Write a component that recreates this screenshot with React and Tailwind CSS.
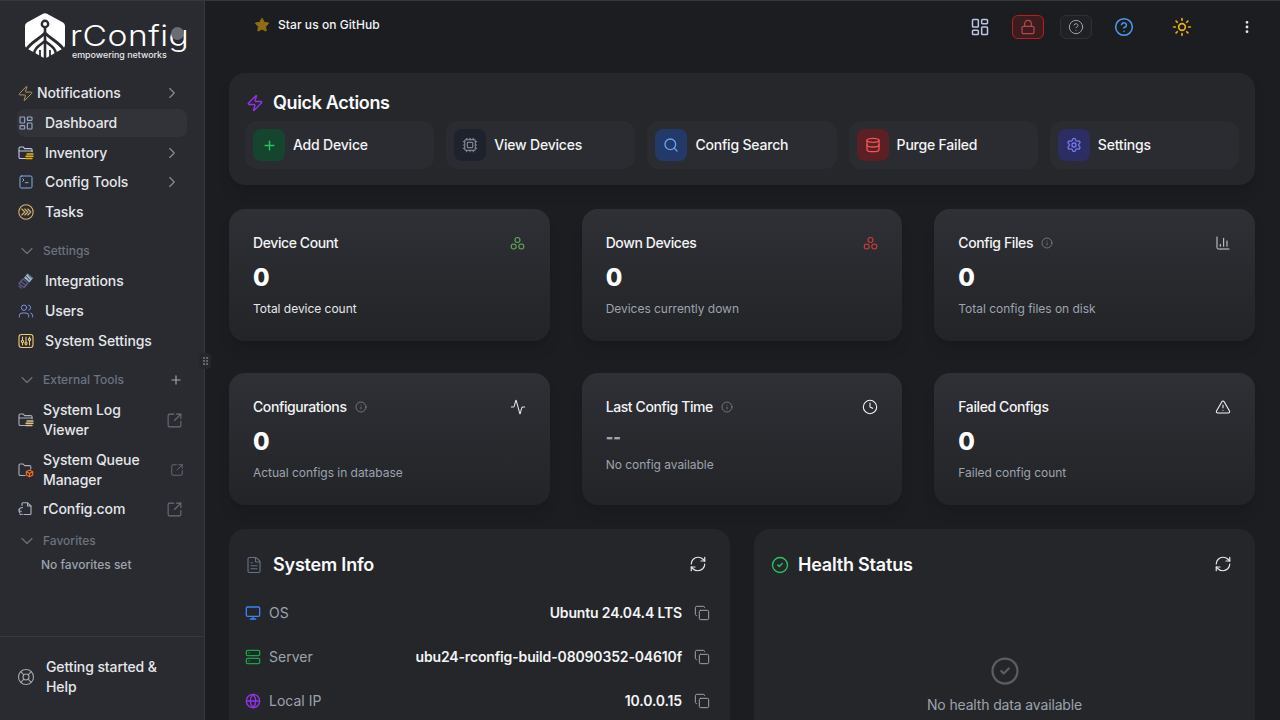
import React from "react";
import {
  Zap, LayoutDashboard, SquareTerminal, ChevronRight, ChevronDown, Users, Plus, SquareArrowOutUpRight,
  LifeBuoy, Star, Lock, CircleHelp, Sun, EllipsisVertical, Cpu, Search, Database, Settings, Activity,
  Clock, TriangleAlert, ChartColumn, Info, FileText, RefreshCw, Monitor, Server, Globe, Copy, CircleCheck,
} from "lucide-react";

const FolderLines = ({ accent = "#eab308", base = "#c0c8e6", size = 16 }) => (
  <svg width={size} height={size} viewBox="0 0 16 16" fill="none" strokeWidth="1.100" strokeLinecap="round">
    <path d="M8 13.500H2.200A1.200 1.200 0 0 1 1 12.300V3.200A1.200 1.200 0 0 1 2.200 2h3l1.400 1.600h6.200a1.200 1.200 0 0 1 1.200 1.200v2" stroke={base} />
    <path d="M1.200 6h13" stroke={base} />
    <path d="M9 9h6M8 11.200h7M8 13.500h6" stroke={accent} strokeWidth="1.400" />
  </svg>
);

const FolderBox = () => (
  <svg width="16" height="16" viewBox="0 0 16 16" fill="none" strokeWidth="1.100" strokeLinecap="round" strokeLinejoin="round">
    <path d="M7 13.500H2.200A1.200 1.200 0 0 1 1 12.300V3.200A1.200 1.200 0 0 1 2.200 2h3l1.400 1.600h5a1.200 1.200 0 0 1 1.200 1.200V7" stroke="#aab0c0" />
    <path d="M11.500 8l3.200 1.700v3.300l-3.200 1.700L8.300 13V9.700zM8.300 9.700l3.200 1.700 3.200-1.700M11.500 11.400v3.300" stroke="#f97316" />
  </svg>
);

const CloudDoc = () => (
  <svg width="16" height="16" viewBox="0 0 16 16" fill="none" stroke="#a9b1c9" strokeWidth="1.100" strokeLinecap="round" strokeLinejoin="round">
    <path d="M4 4.500V2.800A1 1 0 0 1 5 1.800h4.500L13 5v7.500a1 1 0 0 1-1 1H6" />
    <path d="M9.500 2v3H13" />
    <path d="M4.500 6.500a3.500 3.500 0 0 0-3.300 3.500c0 .8.300 1.500.8 2.100M1 8v2.300h2.300M2 13.500l2.500-.3" />
  </svg>
);

const TasksIcon = () => (
  <svg width="16" height="16" viewBox="0 0 16 16" fill="none" stroke="#d9b36c" strokeWidth="1.100" strokeLinecap="round" strokeLinejoin="round">
    <circle cx="8" cy="8" r="7.200" />
    <path d="M3.800 5l3 3-3 3M6.800 5l3 3-3 3M9.800 5l3 3-3 3" />
  </svg>
);

const IntegrationIcon = () => (
  <svg width="16" height="16" viewBox="0 0 16 16" fill="none" strokeLinecap="round">
    <path d="M9.500 .5l5.500 4.500-3.500 4.500L6 5z" fill="#9db3d2" />
    <path d="M10.500 2l3 3M8.500 3.500l3 3.500" stroke="#2a2b30" strokeWidth=".8" />
    <path d="M5 6l5 4-4 4.500-5-4z" stroke="#5d5a86" strokeWidth="1.300" />
    <path d="M3 8.500l5 4M1 13l2 2" stroke="#5d5a86" strokeWidth="1.300" />
  </svg>
);

const SlidersBox = () => (
  <svg width="16" height="16" viewBox="0 0 16 16" fill="none" stroke="#f0cc7a" strokeWidth="1.100" strokeLinecap="round">
    <rect x="1" y="1.500" width="14" height="13" rx="2.500" />
    <path d="M4.500 4v2.800M4.500 10V12M8 4v5M8 11.500v.5M11.500 4v1M11.500 8.200v3.800" />
    <circle cx="4.500" cy="8.400" r="1.100" />
    <circle cx="8" cy="10.300" r="1.100" />
    <circle cx="11.500" cy="6.500" r="1.100" />
  </svg>
);

const TriCircles = ({ color }) => (
  <svg width="15" height="15" viewBox="0 0 15 15" fill="none" stroke={color} strokeWidth="1.100">
    <circle cx="7.500" cy="4" r="2.500" />
    <circle cx="3.700" cy="10.500" r="2.500" />
    <circle cx="11.300" cy="10.500" r="2.500" />
  </svg>
);

const Logo = () => (
  <div className="h-[78px] pl-[25px] pt-[12px] flex items-start relative">
    <svg width="40" height="45" viewBox="0 0 40 45" className="shrink-0">
      <path d="M18 .8a4 4 0 0 1 4 0L38 9.500a4 4 0 0 1 2 3.500V32a4 4 0 0 1-2 3.500L22 44.500a4 4 0 0 1-4 0L2 35.500A4 4 0 0 1 0 32V13a4 4 0 0 1 2-3.500z" fill="#fff" />
      <circle cx="20" cy="11" r="3.200" fill="#fff" stroke="#2a2b30" strokeWidth="2.400" />
      <path d="M20 15V45" stroke="#2a2b30" strokeWidth="2.600" />
      <path d="M1 37C6 29 13 27 20 20C27 27 34 29 39 37" stroke="#2a2b30" strokeWidth="2.800" fill="none" />
      <path d="M9 42C9 35 14 33 20 28C26 33 31 35 31 42" stroke="#2a2b30" strokeWidth="2.600" fill="none" />
      <path d="M15 44.500V37M25 44.500V37" stroke="#2a2b30" strokeWidth="1.800" />
    </svg>
    <div className="ml-[5px] flex flex-col relative">
      <span className="text-[28px] leading-[28px] mt-[9px] font-light text-white tracking-[0.4px] origin-left scale-x-[1.2] font-['Inter',sans-serif]">rConfig</span>
      <span className="text-[8.900px] leading-[10px] font-medium text-[#e5e7eb] ml-[2px] whitespace-nowrap">empowering networks</span>
    </div>
    <span aria-hidden="true" className="absolute left-[171px] top-[26px] w-[13px] h-[13px] rounded-full bg-[#6b6d72]" />
  </div>
);

const NavRow = ({ icon, label, chevron, active, className = "" }) => (
  <div className={`h-7 mx-[17px] flex items-center rounded-lg pr-[6px] ${active ? "bg-[#323338]" : ""} ${className}`}>
    <span className="w-[16px] ml-px flex justify-center shrink-0">{icon}</span>
    <span className="text-sm font-medium text-[#e5e7eb] ml-[11px] tracking-[-0.1px]">{label}</span>
    {chevron && <ChevronRight size={18} strokeWidth={1.500} className="ml-auto text-[#8b8e96]" />}
  </div>
);

const GroupHead = ({ label, plus, className = "" }) => (
  <div className={`h-5 ml-[17px] mr-[21px] flex items-center ${className}`}>
    <ChevronDown size={20} strokeWidth={1.300} className="text-[#6b7280] shrink-0" />
    <span className="ml-[6px] text-xs font-medium text-[#6b7280]">{label}</span>
    {plus && <Plus size={14} strokeWidth={2} className="ml-auto text-[#a3a7b0]" />}
  </div>
);

const LinkRow = ({ icon, label, extSize = 17, extClass = "mr-[21px]", className = "" }) => (
  <div className={`ml-[17px] flex items-center ${className}`}>
    <span className="w-[16px] ml-px flex justify-center shrink-0">{icon}</span>
    <span className="ml-[9px] w-[100px] text-sm leading-5 font-medium text-[#e5e7eb] shrink-0 tracking-[-0.1px]">{label}</span>
    <SquareArrowOutUpRight size={extSize} strokeWidth={1.500} className={`ml-auto text-[#687080] ${extClass}`} />
  </div>
);

const Sidebar = () => (
  <aside className="w-[205px] shrink-0 h-full bg-[#2a2b30] border-r border-[#36373c] flex flex-col relative">
    <Logo />
    <nav className="flex flex-col gap-[2px]">
      <div className="h-7 mx-[17px] flex items-center pr-[6px]">
        <Zap size={17} strokeWidth={1.400} className="text-[#b3965f] shrink-0" />
        <span className="ml-[3px] text-sm font-medium text-[#e5e7eb] tracking-[-0.1px]">Notifications</span>
        <ChevronRight size={18} strokeWidth={1.500} className="ml-auto text-[#8b8e96]" />
      </div>
      <NavRow active icon={<LayoutDashboard size={18} strokeWidth={1.700} className="text-[#99a6cc]" />} label="Dashboard" />
      <NavRow icon={<FolderLines />} label="Inventory" chevron />
      <NavRow className="-mt-px" icon={<SquareTerminal size={18} strokeWidth={1.500} className="text-[#7fb2e5]" />} label="Config Tools" chevron />
      <NavRow icon={<TasksIcon />} label="Tasks" />
    </nav>
    <GroupHead label="Settings" className="mt-[15px]" />
    <div className="flex flex-col gap-[2px] mt-[6px]">
      <NavRow icon={<IntegrationIcon />} label="Integrations" />
      <NavRow icon={<Users size={18} strokeWidth={1.500} className="text-[#7f90db]" />} label="Users" />
      <NavRow icon={<SlidersBox />} label="System Settings" />
    </div>
    <GroupHead label="External Tools" plus className="mt-[15px]" />
    <LinkRow className="mt-[10px]" icon={<FolderLines size={16} base="#aab0c0" accent="#d9c08a" />} label={<>System Log<br />Viewer</>} />
    <LinkRow className="mt-[10px]" icon={<FolderBox />} label={<>System Queue<br />Manager</>} extSize={14} extClass="mr-[20px]" />
    <LinkRow className="mt-[5px] h-7" icon={<CloudDoc />} label="rConfig.com" />
    <GroupHead label="Favorites" className="mt-[8px]" />
    <div className="mt-[4px] ml-[41px] text-xs leading-5 font-medium text-[#9ca3af]">No favorites set</div>
    <div className="mt-auto h-[84px] border-t border-[#36373c] pl-[17px] pb-[4px] flex items-center">
      <LifeBuoy size={18} strokeWidth={1.500} className="text-[#a3a7b0] shrink-0" />
      <span className="ml-[11px] text-sm leading-5 font-medium text-[#e5e7eb] tracking-[-0.1px]">Getting started &amp;<br />Help</span>
    </div>
    <div className="absolute left-[199px] top-[352px] w-[12px] h-[16px] rounded bg-[#26272b] flex items-center justify-center z-10">
      <svg width="5" height="8" viewBox="0 0 5 8" fill="#b0b4bc">
        <circle cx="1" cy="1" r=".8" /><circle cx="4" cy="1" r=".8" />
        <circle cx="1" cy="4" r=".8" /><circle cx="4" cy="4" r=".8" />
        <circle cx="1" cy="7" r=".8" /><circle cx="4" cy="7" r=".8" />
      </svg>
    </div>
  </aside>
);

const Topbar = () => (
  <div className="h-[72px] flex items-start pl-[49px] pr-[25px] shrink-0">
    <div className="flex items-center h-4 mt-[16px]">
      <Star size={16} strokeWidth={1.500} className="text-[#8f6d10] fill-[#8f6d10]" />
      <span className="ml-2 text-xs font-medium text-[#f3f4f6] tracking-[0.06px]">Star us on GitHub</span>
    </div>
    <div className="ml-auto flex items-center h-6 mt-[14px]">
      <LayoutDashboard size={20} strokeWidth={1.800} className="text-[#bcc5e3]" />
      <div className="ml-[22px] w-[32px] h-[24px] rounded-md border border-[#b91c1c] bg-[#3b1d20] flex items-center justify-center">
        <Lock size={16} strokeWidth={1.800} className="text-[#b5474c]" />
      </div>
      <div className="ml-[16px] w-[32px] h-[24px] rounded-md border border-[#303137] bg-[#202125] flex items-center justify-center">
        <CircleHelp size={16} strokeWidth={1.500} className="text-[#9ca3af]" />
      </div>
      <CircleHelp size={20} strokeWidth={1.800} className="ml-[22px] text-[#4b9bf0]" />
      <Sun size={20} strokeWidth={2} className="ml-[38px] text-[#eab308]" />
      <EllipsisVertical size={16} strokeWidth={2.200} className="ml-[47px] text-[#e5e7eb]" />
    </div>
  </div>
);

const actions = [
  { label: "Add Device", box: "bg-[#16452f]", icon: <Plus size={15} strokeWidth={2.200} className="text-[#22c55e]" /> },
  { label: "View Devices", box: "bg-[#1e222c]", icon: <Cpu size={16} strokeWidth={1.800} className="text-[#7d8390]" /> },
  { label: "Config Search", box: "bg-[#233a68]", icon: <Search size={16} strokeWidth={2} className="text-[#60a5fa]" /> },
  { label: "Purge Failed", box: "bg-[#5b1f24]", icon: <Database size={16} strokeWidth={2} className="text-[#f05656]" /> },
  { label: "Settings", box: "bg-[#2c2d63]", icon: <Settings size={16} strokeWidth={2} className="text-[#7678ed]" /> },
];

const QuickActions = () => (
  <section className="rounded-2xl bg-[#26272b] shadow-lg px-4 pt-4 pb-4">
    <div className="h-7 flex items-center">
      <Zap size={18} strokeWidth={1.800} className="text-[#9333ea] ml-px" />
      <span className="ml-[9px] text-lg font-semibold text-[#f9fafb] tracking-[-0.35px]">Quick Actions</span>
    </div>
    <div className="mt-1 grid grid-cols-5 gap-3">
      {actions.map((a) => (
        <div key={a.label} className="h-12 rounded-xl bg-[#2b2c31] flex items-center pl-2">
          <span className={`w-8 h-8 rounded-lg flex items-center justify-center ${a.box}`}>{a.icon}</span>
          <span className="ml-2 text-sm font-medium text-[#f3f4f6] tracking-[-0.2px]">{a.label}</span>
        </div>
      ))}
    </div>
  </section>
);

const StatCard = ({ title, info, icon, value, sub, subClass = "text-[#9ca3af]", dash }) => (
  <div className="rounded-2xl bg-gradient-to-b from-[#2f3035] to-[#232428] shadow-lg p-6">
    <div className="h-5 flex items-center">
      <span className="text-sm font-medium text-[#f3f4f6] tracking-[-0.4px]">{title}</span>
      {info && <Info size={12} strokeWidth={1.400} className="ml-[8px] text-[#8b8e96]" />}
      <span className="ml-auto flex items-center justify-center w-4 h-4">{icon}</span>
    </div>
    {dash ? (
      <div className="mt-2 text-base leading-6 font-black text-[#9ca3af]">--</div>
    ) : (
      <div className="mt-[9px] text-2xl leading-8 font-extrabold text-white">{value}</div>
    )}
    <div className={`${dash ? "mt-2" : "mt-[7px]"} text-xs leading-4 tracking-[-0.03px] ${subClass}`}>{sub}</div>
  </div>
);

const InfoRow = ({ icon, label, value }) => (
  <div className="h-11 flex items-center">
    <span className="w-4 flex justify-center">{icon}</span>
    <span className="ml-[8px] text-sm text-[#9ca3af]">{label}</span>
    <span className="ml-auto text-sm font-semibold text-[#f3f4f6] tracking-[-0.15px]">{value}</span>
    <Copy size={16} strokeWidth={1.500} className="ml-[12px] text-[#9ca3af]" />
  </div>
);

const SystemInfo = () => (
  <section className="rounded-t-2xl bg-[#25262a] pl-[16px] pr-[20px] pt-[24px] h-[260px]">
    <div className="h-[24px] flex items-center">
      <FileText size={18} strokeWidth={1.500} className="text-[#677188]" />
      <span className="ml-[10px] text-lg font-semibold text-[#f9fafb] tracking-[-0.2px]">System Info</span>
      <RefreshCw size={18} strokeWidth={1.600} className="ml-auto mr-[3px] -mt-[3px] text-[#e5e7eb]" />
    </div>
    <div className="mt-[14px]">
      <InfoRow icon={<Monitor size={16} strokeWidth={2} className="text-[#3b82f6]" />} label="OS" value="Ubuntu 24.04.4 LTS" />
      <InfoRow icon={<Server size={16} strokeWidth={2} className="text-[#16a34a]" />} label="Server" value="ubu24-rconfig-build-08090352-04610f" />
      <InfoRow icon={<Globe size={16} strokeWidth={2} className="text-[#9333ea]" />} label="Local IP" value="10.0.0.15" />
    </div>
  </section>
);

const HealthStatus = () => (
  <section className="rounded-t-2xl bg-[#25262a] pl-[17px] pr-[23px] pt-[24px] h-[260px] flex flex-col">
    <div className="h-[24px] flex items-center">
      <CircleCheck size={18} strokeWidth={1.800} className="text-[#22c55e]" />
      <span className="ml-[9px] text-lg font-semibold text-[#f9fafb] tracking-[-0.2px]">Health Status</span>
      <RefreshCw size={18} strokeWidth={1.600} className="ml-auto -mt-[3px] text-[#e5e7eb]" />
    </div>
    <div className="mt-[79px] flex flex-col items-center pl-[6px]">
      <CircleCheck size={30} strokeWidth={1.800} className="text-[#5b5d63]" />
      <span className="mt-[9px] text-sm text-[#9ca3af] tracking-[-0.15px]">No health data available</span>
    </div>
  </section>
);

export default function App() {
  return (
    <div className="h-screen w-full overflow-hidden bg-[#1c1d21] flex font-['Inter',sans-serif] border-t border-[#36373c]">
      <Sidebar />
      <main className="flex-1 min-w-0 flex flex-col">
        <Topbar />
        <div className="pl-[24px] pr-[25px] flex flex-col">
          <QuickActions />
          <div className="mt-6 grid grid-cols-3 gap-8">
            <StatCard title="Device Count" icon={<TriCircles color="#5fa85a" />} value="0" sub="Total device count" subClass="text-[#e5e7eb]" />
            <StatCard title="Down Devices" icon={<TriCircles color="#d13b40" />} value="0" sub="Devices currently down" />
            <StatCard title="Config Files" info icon={<ChartColumn size={18} strokeWidth={1.500} className="text-[#d1d5db]" />} value="0" sub="Total config files on disk" />
            <StatCard title="Configurations" info icon={<Activity size={18} strokeWidth={1.600} className="text-[#e5e7eb]" />} value="0" sub="Actual configs in database" />
            <StatCard title="Last Config Time" info dash icon={<Clock size={18} strokeWidth={1.600} className="text-[#f3f4f6]" />} sub="No config available" />
            <StatCard title="Failed Configs" icon={<TriangleAlert size={18} strokeWidth={1.600} className="text-[#f3f4f6]" />} value="0" sub="Failed config count" />
          </div>
          <div className="mt-6 grid grid-cols-2 gap-6">
            <SystemInfo />
            <HealthStatus />
          </div>
        </div>
      </main>
    </div>
  );
}
